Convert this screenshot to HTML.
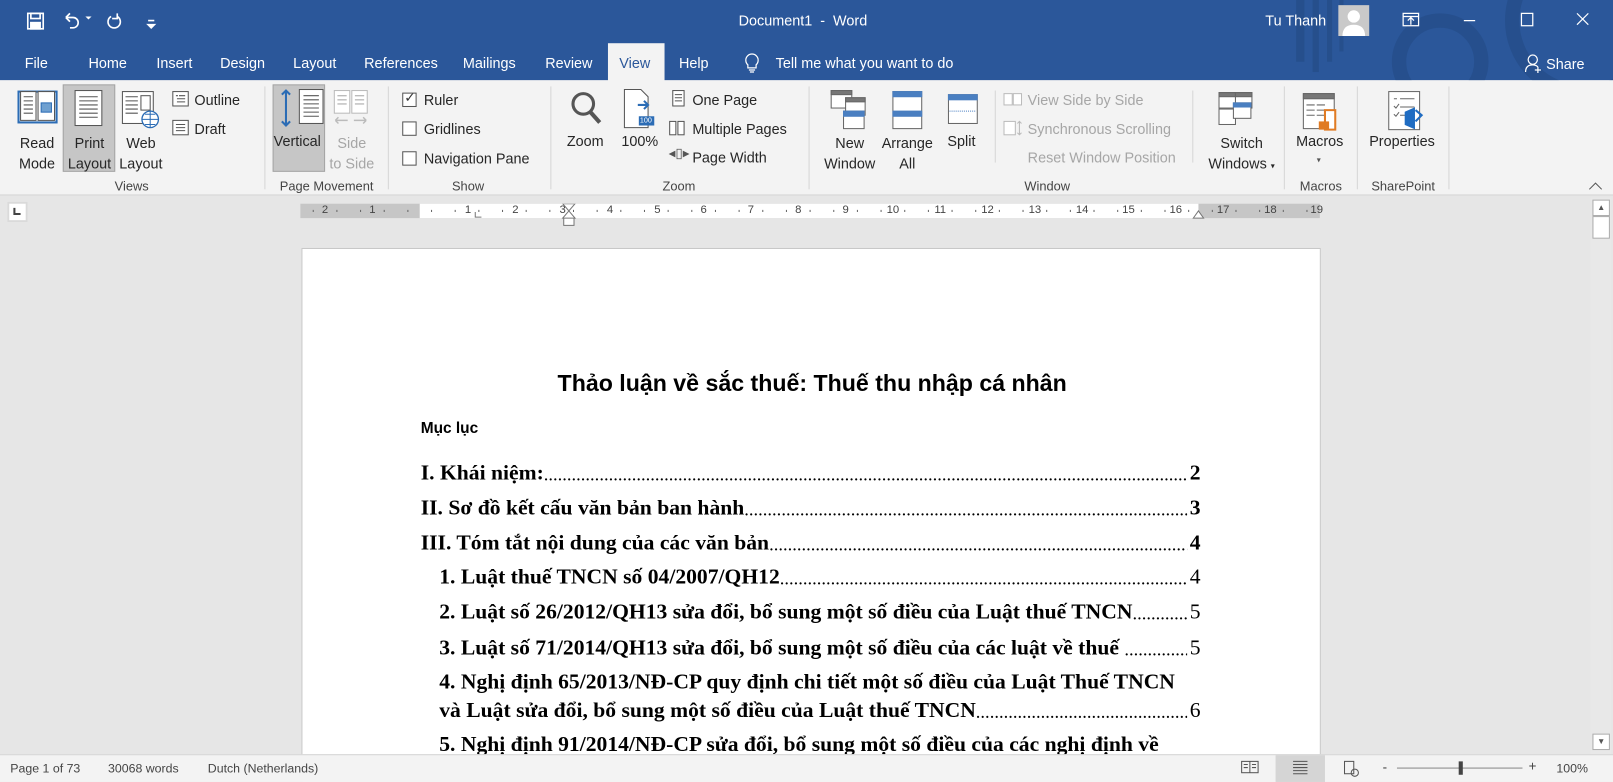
<!DOCTYPE html>
<html><head><meta charset="utf-8"><style>
*{margin:0;padding:0;box-sizing:border-box}
html,body{width:1613px;height:782px;overflow:hidden;background:#e6e6e6}
#w{position:absolute;left:0;top:0;width:1568px;height:760px;transform:scale(1.0287,1.0289);transform-origin:0 0;font-family:"Liberation Sans",sans-serif;background:#e6e6e6;overflow:hidden}
.a{position:absolute;white-space:nowrap}
.wt{color:#fff;font-size:14px}
.rb{color:#262626;font-size:14px}
.gl{color:#444;font-size:12.5px;top:174px}
.gr{color:#a6a6a6}
.sep{position:absolute;top:84px;width:1px;height:100px;background:#d6d6d6}
.c{text-align:center}
.cb{position:absolute;left:391px;width:14px;height:14px;border:1px solid #555;background:#fff}
.doc{font-family:"Liberation Serif",serif;font-weight:bold;font-size:21px;color:#000}
.toc{position:absolute;display:flex;align-items:flex-end;white-space:nowrap}
.toc .d{flex:1;overflow:hidden;font-weight:normal;letter-spacing:0;font-size:18px;margin-right:3px}
.rn{position:absolute;top:198px;font-size:11px;color:#444;transform:translateX(-50%)}
</style></head><body><div id="w">
<div class="a" style="left:0;top:0;width:1568px;height:78px;background:#2b579a"></div>
<svg class="a" style="left:1240px;top:0" width="328" height="78"><g fill="none" stroke="#264f8c" stroke-width="14" opacity=".9"><circle cx="160" cy="60" r="40"/><circle cx="300" cy="20" r="70"/></g><g fill="#264f8c"><rect x="20" y="0" width="8" height="60"/><rect x="36" y="0" width="6" height="70"/><rect x="50" y="0" width="5" height="60"/><rect x="62" y="0" width="4" height="50"/></g></svg>
<svg class="a" style="left:26px;top:12px" width="130" height="18" fill="none" stroke="#fff" stroke-width="1.6"><rect x="1" y="1" width="15" height="15"/><rect x="4" y="10" width="9" height="6" fill="#fff"/><rect x="4" y="1" width="9" height="5"/><path d="M38 5 h7 a5 5 0 0 1 0 10 h-3 M38 5 l4 -4 M38 5 l4 4"/><path d="M57 4 l3 3 l3 -3z" fill="#fff" stroke="none"/><path d="M82 4 a6 6 0 1 0 6 0 M88 1 v5 h-5"/><path d="M118 8 h6 M118 12 l3 3 l3 -3z" fill="#fff"/></svg>
<div class="a wt" style="left:718px;top:12px">Document1&nbsp; -&nbsp; Word</div>
<div class="a wt" style="left:1230px;top:12px">Tu Thanh</div>
<div class="a" style="left:1301px;top:5px;width:30px;height:30px;background:#c9c9c9"><svg width="30" height="30"><circle cx="15" cy="11" r="6" fill="#fff"/><path d="M4 30 q0-11 11-11 q11 0 11 11z" fill="#fff"/></svg></div>
<svg class="a" style="left:1363px;top:11px" width="190" height="20" fill="none" stroke="#fff" stroke-width="1.2"><rect x="1" y="2" width="15" height="12"/><path d="M1 5 h15 M8.5 13 v-7 M5.5 9 l3-3 l3 3"/><path d="M60 9 h11"/><rect x="116" y="2" width="11" height="12"/><path d="M170 2 l11 11 M181 2 l-11 11"/></svg>
<div class="a wt" style="left:24px;top:53px">File</div>
<div class="a wt" style="left:86px;top:53px">Home</div>
<div class="a wt" style="left:152px;top:53px">Insert</div>
<div class="a wt" style="left:214px;top:53px">Design</div>
<div class="a wt" style="left:285px;top:53px">Layout</div>
<div class="a wt" style="left:354px;top:53px">References</div>
<div class="a wt" style="left:450px;top:53px">Mailings</div>
<div class="a wt" style="left:530px;top:53px">Review</div>
<div class="a" style="left:591px;top:42px;width:55px;height:37px;background:#f3f3f3"></div>
<div class="a" style="left:602px;top:53px;color:#2b579a;font-size:14px">View</div>
<div class="a wt" style="left:660px;top:53px">Help</div>
<svg class="a" style="left:723px;top:50px" width="16" height="22" fill="none" stroke="#fff" stroke-width="1.2"><path d="M4 13 a6 6 0 1 1 8 0 v3 h-8z M5 18 h6 M6 20 h4"/></svg>
<div class="a wt" style="left:754px;top:53px">Tell me what you want to do</div>
<svg class="a" style="left:1482px;top:52px" width="18" height="20" fill="none" stroke="#fff" stroke-width="1.2"><circle cx="8" cy="6" r="4.5"/><path d="M1 18 q0-7 7-7 q3 0 5 2 M13 13 v6 M10 16 h6"/></svg>
<div class="a wt" style="left:1503px;top:54px">Share</div>
<div class="a" style="left:0;top:78px;width:1568px;height:112px;background:#f3f3f3;border-bottom:1px solid #d5d5d5"></div>
<div class="sep" style="left:257px"></div><div class="sep" style="left:377px"></div><div class="sep" style="left:535px"></div><div class="sep" style="left:786px"></div><div class="sep" style="left:967px;top:88px;height:70px"></div><div class="sep" style="left:1159px;top:88px;height:70px"></div><div class="sep" style="left:1248px"></div><div class="sep" style="left:1319px"></div><div class="sep" style="left:1408px"></div>
<div class="a" style="left:61px;top:82px;width:51px;height:85px;background:#c6c6c6;border:1px solid #a5a5a5"></div>
<div class="a" style="left:265px;top:82px;width:51px;height:85px;background:#c6c6c6;border:1px solid #a5a5a5"></div>
<svg class="a" style="left:0;top:84px" width="1420" height="60" fill="none" stroke="#555" stroke-width="1">
<rect x="18" y="5" width="37" height="30" stroke="#2b6cb5" stroke-width="2"/><rect x="20" y="5" width="15" height="28" fill="#fff"/><rect x="37" y="5" width="16" height="28" fill="#fff"/><path d="M23 10h9M23 14h9M23 18h9M23 22h9M23 26h9"/><rect x="40" y="16" width="10" height="9" fill="#6fa0d0" stroke="#2b6cb5"/>
<rect x="73" y="4" width="26" height="34" fill="#fff"/><path d="M77 10h18M77 14h18M77 18h18M77 22h18M77 26h18M77 30h18"/>
<rect x="119" y="5" width="30" height="31" fill="#fff"/><path d="M122 10h12M122 14h12M122 18h12M122 22h12M122 26h12"/><rect x="137" y="9" width="9" height="14"/><circle cx="146" cy="32" r="8" fill="#fff" stroke="#2b6cb5" stroke-width="1.3"/><path d="M138 32h16M146 24v16M141 27h10M141 37h10" stroke="#2b6cb5"/>
<rect x="168" y="5" width="15" height="14" fill="#fff"/><path d="M171 9h2M174 9h6M172 12h8M172 15h8"/><rect x="168" y="33" width="15" height="14" fill="#fff"/><path d="M171 37h9M171 40h9M171 43h9"/>
<rect x="291" y="3" width="23" height="33" fill="#fff"/><path d="M295 9h15M295 13h15M295 17h15M295 21h15M295 25h15M295 29h15"/><path d="M278 4v34M274 8l4-4l4 4M274 34l4 4l4-4" stroke="#2b6cb5" stroke-width="2"/>
<g stroke="#bbb"><rect x="325" y="4" width="15" height="22" fill="#fff"/><rect x="342" y="4" width="15" height="22" fill="#fff"/><path d="M328 9h9M328 13h9M328 17h9M345 9h9M345 13h9M345 17h9M326 33h12M326 33l3-3M326 33l3 3M344 33h12M356 33l-3-3M356 33l-3 3" stroke-width="1.4"/></g>
<circle cx="567" cy="17" r="10" stroke="#555" stroke-width="3"/><path d="M574 25l9 10" stroke="#555" stroke-width="4"/>
<path d="M607 3h16l7 7v30h-23z" fill="#fff"/><rect x="621" y="29" width="15" height="9" fill="#2b6cb5" stroke="none"/><path d="M620 18h10M626 14l4 4l-4 4" stroke="#2b6cb5" stroke-width="2"/>
<rect x="654" y="4" width="11" height="15" fill="#fff"/><path d="M656 8h7M656 11h7M656 14h7"/>
<rect x="651" y="34" width="6" height="13" fill="#fff"/><rect x="659" y="34" width="6" height="13" fill="#fff"/>
<g stroke="#666"><rect x="808" y="4" width="20" height="17" fill="#fff"/><rect x="808" y="4" width="20" height="4" fill="#777"/><rect x="822" y="11" width="19" height="17" fill="#fff"/><rect x="822" y="11" width="19" height="4" fill="#777"/><rect x="820" y="24" width="20" height="17" fill="#fff"/><rect x="820" y="24" width="20" height="5" fill="#4a7fc1" stroke="#4a7fc1"/>
<rect x="868" y="5" width="28" height="36" fill="#fff"/><rect x="868" y="5" width="28" height="5" fill="#4a7fc1" stroke="#4a7fc1"/><rect x="868" y="24" width="28" height="5" fill="#4a7fc1" stroke="#4a7fc1"/>
<rect x="922" y="8" width="28" height="28" fill="#fff"/><rect x="922" y="8" width="28" height="5" fill="#4a7fc1" stroke="#4a7fc1"/><path d="M923 24h26" stroke="#4a7fc1" stroke-dasharray="1 1"/>
<rect x="1185" y="6" width="16" height="15" fill="#fff"/><rect x="1185" y="6" width="16" height="4" fill="#777"/><rect x="1201" y="6" width="16" height="15" fill="#fff"/><rect x="1201" y="6" width="16" height="4" fill="#777"/><rect x="1185" y="22" width="16" height="15" fill="#fff"/><rect x="1199" y="16" width="17" height="15" fill="#fff"/><rect x="1199" y="16" width="17" height="4" fill="#4a7fc1" stroke="#4a7fc1"/>
<rect x="1267" y="7" width="30" height="34" fill="#fff"/><rect x="1267" y="7" width="30" height="5" fill="#777"/><path d="M1270 18h8M1280 18h8M1270 23h8M1280 23h8M1270 28h8M1280 28h8"/><path d="M1288 23h10v19h-10z" fill="#fff" stroke="#e07b24" stroke-width="2"/><rect x="1282" y="34" width="10" height="8" fill="#e07b24" stroke="none"/>
<rect x="1350" y="5" width="30" height="37" fill="#fff"/><path d="M1355 12h3M1361 12h14M1355 19l2 2l3-4M1361 20h14M1355 27l2 2l3-4M1361 28h6"/><path d="M1366 25l9-4v20l-9-4z" fill="#1f6cc2" stroke="#1f6cc2"/><path d="M1376 23l6 5l-6 6" stroke="#1f6cc2" stroke-width="2"/></g>
<g stroke="#bbb"><rect x="976" y="7" width="8" height="11" fill="#fff"/><rect x="985" y="7" width="8" height="11" fill="#fff"/><rect x="976" y="34" width="11" height="13" fill="#fff"/><path d="M991 34v13M989 36l2-2l2 2M989 45l2 2l2-2"/><rect x="976" y="62" width="16" height="13"/></g>
</svg>
<div class="a rb c" style="left:5px;top:129px;width:62px;line-height:20px">Read<br>Mode</div>
<div class="a rb c" style="left:56px;top:129px;width:62px;line-height:20px">Print<br>Layout</div>
<div class="a rb c" style="left:106px;top:129px;width:62px;line-height:20px">Web<br>Layout</div>
<div class="a rb" style="left:189px;top:89px">Outline</div>
<div class="a rb" style="left:189px;top:117px">Draft</div>
<div class="a gl c" style="left:98px;width:60px">Views</div>
<div class="a rb" style="left:266px;top:129px">Vertical</div>
<div class="a rb c gr" style="left:311px;top:129px;width:62px;line-height:20px">Side<br>to Side</div>
<div class="a gl c" style="left:258px;width:119px">Page Movement</div>
<div class="cb" style="top:90px"></div><div class="a" style="left:393px;top:87px;font-size:13px;color:#333">✓</div>
<div class="cb" style="top:118px"></div><div class="cb" style="top:147px"></div>
<div class="a rb" style="left:412px;top:89px">Ruler</div>
<div class="a rb" style="left:412px;top:117px">Gridlines</div>
<div class="a rb" style="left:412px;top:146px">Navigation Pane</div>
<div class="a gl c" style="left:425px;width:60px">Show</div>
<div class="a rb" style="left:551px;top:129px">Zoom</div>
<div class="a rb" style="left:604px;top:129px">100%</div>
<div class="a" style="left:622px;top:114px;font-size:7px;color:#fff">100</div>
<div class="a rb" style="left:673px;top:89px">One Page</div>
<div class="a rb" style="left:673px;top:117px">Multiple Pages</div>
<div class="a rb" style="left:673px;top:145px">Page Width</div>
<div class="a" style="left:650px;top:141px;font-size:13px;color:#555">◂▯▸</div>
<div class="a gl c" style="left:630px;width:60px">Zoom</div>
<div class="a rb c" style="left:791px;top:129px;width:70px;line-height:20px">New<br>Window</div>
<div class="a rb c" style="left:850px;top:129px;width:64px;line-height:20px">Arrange<br>All</div>
<div class="a rb" style="left:921px;top:129px">Split</div>
<div class="a rb gr" style="left:999px;top:89px">View Side by Side</div>
<div class="a rb gr" style="left:999px;top:117px">Synchronous Scrolling</div>
<div class="a rb gr" style="left:999px;top:145px">Reset Window Position</div>
<div class="a rb c" style="left:1167px;top:129px;width:80px;line-height:20px">Switch<br>Windows <span style="font-size:8px">▾</span></div>
<div class="a gl c" style="left:988px;width:60px">Window</div>
<div class="a rb" style="left:1260px;top:129px">Macros</div>
<div class="a" style="left:1280px;top:151px;font-size:8px;color:#555">▾</div>
<div class="a gl c" style="left:1254px;width:60px">Macros</div>
<div class="a rb" style="left:1331px;top:129px">Properties</div>
<div class="a gl c" style="left:1324px;width:80px">SharePoint</div>
<svg class="a" style="left:1544px;top:176px" width="14" height="10" fill="none" stroke="#555"><path d="M1 8l6-6l6 6"/></svg>
<div class="a" style="left:7px;top:196px;width:20px;height:20px;background:#fff;border:2px solid #dadada"></div>
<svg class="a" style="left:11px;top:200px" width="10" height="10"><path d="M3 2v6h6" stroke="#444" stroke-width="2" fill="none"/></svg>
<div class="a" style="left:292px;top:198px;width:991px;height:14px;background:#c6c6c6"></div>
<div class="a" style="left:408px;top:198px;width:757px;height:14px;background:#fff"></div>
<svg class="a" style="left:292px;top:198px" width="991" height="14"><g stroke="#666" stroke-width="1">
<path d="M12.5 6v2M35.5 6v2M58.5 6v2M81.5 6v2M104.5 6v2M127.5 6v2M150.5 6v2M173.5 6v2M196.5 6v2M219.5 6v2M242.5 6v2M265.5 6v2M288.5 6v2M311.5 6v2M334.5 6v2M357.5 6v2M380.5 6v2M403.5 6v2M426.5 6v2M449.5 6v2M472.5 6v2M495.5 6v2M518.5 6v2M541.5 6v2M564.5 6v2M587.5 6v2M610.5 6v2M633.5 6v2M656.5 6v2M679.5 6v2M702.5 6v2M725.5 6v2M748.5 6v2M771.5 6v2M794.5 6v2M817.5 6v2M840.5 6v2M863.5 6v2M886.5 6v2M909.5 6v2M932.5 6v2M955.5 6v2M978.5 6v2"/></g></svg>
<div class="rn" style="left:316px">2</div><div class="rn" style="left:362px">1</div>
<div class="rn" style="left:455px">1</div><div class="rn" style="left:501px">2</div><div class="rn" style="left:547px">3</div><div class="rn" style="left:593px">4</div><div class="rn" style="left:639px">5</div><div class="rn" style="left:684px">6</div><div class="rn" style="left:730px">7</div><div class="rn" style="left:776px">8</div><div class="rn" style="left:822px">9</div><div class="rn" style="left:868px">10</div><div class="rn" style="left:914px">11</div><div class="rn" style="left:960px">12</div><div class="rn" style="left:1006px">13</div><div class="rn" style="left:1052px">14</div><div class="rn" style="left:1097px">15</div><div class="rn" style="left:1143px">16</div><div class="rn" style="left:1189px">17</div><div class="rn" style="left:1235px">18</div><div class="rn" style="left:1280px">19</div>
<svg class="a" style="left:292px;top:198px" width="1000" height="22" fill="none" stroke="#777"><path d="M255 0l6 7l-6 7h12l-6-7l6-7z M256 14h10v7h-10z M170 8v5h6" fill="#fff"/><path d="M868 14l5-7l5 7z" fill="#fff"/></svg>
<div class="a" style="left:293px;top:241px;width:991px;height:530px;background:#fff;border:1px solid #c8c8c8"></div>
<div class="a" style="left:542px;top:360px;font-size:22.5px;font-weight:bold;color:#000">Thảo luận về sắc thuế: Thuế thu nhập cá nhân</div>
<div class="a" style="left:409px;top:408px;font-size:15px;font-weight:bold;color:#000">Mục lục</div>
<div class="toc doc" style="left:409px;width:758px;top:447px"><span>I. Khái niệm:</span><span class="d">................................................................................................................................................................................................</span><span>2</span></div>
<div class="toc doc" style="left:409px;width:758px;top:481px"><span>II. Sơ đồ kết cấu văn bản ban hành</span><span class="d">................................................................................................................................................................................................</span><span>3</span></div>
<div class="toc doc" style="left:409px;width:758px;top:515px"><span>III. Tóm tắt nội dung của các văn bản</span><span class="d">................................................................................................................................................................................................</span><span>4</span></div>
<div class="toc doc" style="left:427px;width:740px;top:548px"><span>1. Luật thuế TNCN số 04/2007/QH12</span><span class="d">................................................................................................................................................................................................</span><span style="font-weight:normal">4</span></div>
<div class="toc doc" style="left:427px;width:740px;top:582px"><span>2. Luật số 26/2012/QH13 sửa đổi, bổ sung một số điều của Luật thuế TNCN</span><span class="d">................................................................................................................................................................................................</span><span style="font-weight:normal">5</span></div>
<div class="toc doc" style="left:427px;width:740px;top:617px"><span>3. Luật số 71/2014/QH13 sửa đổi, bổ sung một số điều của các luật về thuế&nbsp;</span><span class="d">................................................................................................................................................................................................</span><span style="font-weight:normal">5</span></div>
<div class="a doc" style="left:427px;top:650px">4. Nghị định 65/2013/NĐ-CP quy định chi tiết một số điều của Luật Thuế TNCN</div>
<div class="toc doc" style="left:427px;width:740px;top:678px"><span>và Luật sửa đổi, bổ sung một số điều của Luật thuế TNCN</span><span class="d">................................................................................................................................................................................................</span><span style="font-weight:normal">6</span></div>
<div class="a doc" style="left:427px;top:711px">5. Nghị định 91/2014/NĐ-CP sửa đổi, bổ sung một số điều của các nghị định về</div>
<div class="a" style="left:1546px;top:192px;width:20px;height:541px;background:#e8e8e8"></div>
<div class="a" style="left:1548px;top:194px;width:17px;height:16px;background:#fff;border:1px solid #ababab;font-size:8px;color:#555;text-align:center;line-height:14px">▲</div>
<div class="a" style="left:1548px;top:210px;width:17px;height:22px;background:#fff;border:1px solid #ababab"></div>
<div class="a" style="left:1548px;top:713px;width:17px;height:16px;background:#fff;border:1px solid #ababab;font-size:8px;color:#555;text-align:center;line-height:14px">▼</div>
<div class="a" style="left:0;top:733px;width:1568px;height:27px;background:#f3f3f3;border-top:1px solid #d5d5d5"></div>
<div class="a" style="left:10px;top:740px;font-size:12px;color:#444">Page 1 of 73</div>
<div class="a" style="left:105px;top:740px;font-size:12px;color:#444">30068 words</div>
<div class="a" style="left:202px;top:740px;font-size:12px;color:#444">Dutch (Netherlands)</div>
<div class="a" style="left:1240px;top:734px;width:48px;height:26px;background:#d5d5d5"></div>
<svg class="a" style="left:1205px;top:738px" width="130" height="18" fill="none" stroke="#555"><rect x="2" y="2" width="16" height="11"/><path d="M10 2v11M4 5h4M4 8h4M12 5h4M12 8h4"/><path d="M52 2h14M52 5h14M52 8h14M52 11h14M52 14h14"/><rect x="102" y="2" width="9" height="12"/><circle cx="112" cy="13" r="3.5"/></svg>
<div class="a" style="left:1344px;top:738px;font-size:13px;color:#444">-</div>
<div class="a" style="left:1358px;top:746px;width:122px;height:1px;background:#888"></div>
<div class="a" style="left:1418px;top:740px;width:4px;height:13px;background:#444"></div>
<div class="a" style="left:1486px;top:737px;font-size:13px;color:#444">+</div>
<div class="a" style="left:1513px;top:740px;font-size:12px;color:#444">100%</div>
</div></body></html>
